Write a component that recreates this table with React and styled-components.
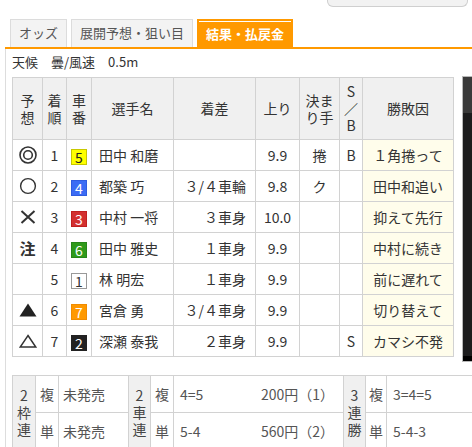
import React from 'react';
import styled, { createGlobalStyle } from 'styled-components';

const GlobalStyle = createGlobalStyle`
  html, body { margin: 0; padding: 0; background: #fff; overflow: hidden; }
  body { font-family: "Noto Sans CJK JP", "Noto Sans", sans-serif; color: #333; }
`;

const Page = styled.div`
  width: 472px;
  height: 447px;
  overflow: hidden;
`;

const TopBar = styled.div`
  display: flex;
  justify-content: flex-end;
  padding-right: 4px;
  height: 19px;
`;

const TopBox = styled.div`
  box-sizing: border-box;
  width: 141px;
  height: 7px;
  background: #f2f2f2;
  border: 1px solid #cfcfcf;
  border-top: none;
  border-radius: 0 0 6px 6px;
`;

const TabBar = styled.div`
  display: flex;
  gap: 4px;
  margin-left: 5px;
  padding-left: 5px;
  border-bottom: 2px solid #ff9900;
  width: 600px;
`;

const Tab = styled.div`
  box-sizing: border-box;
  height: 28px;
  padding: 0 ${p => p.$pad}px;
  font-size: 13px;
  line-height: ${p => (p.$active ? 25 : 26)}px;
  white-space: nowrap;
  border: ${p => (p.$active ? '2px solid #ff9900' : '1px solid #dcdcdc')};
  border-bottom: none;
  background: ${p => (p.$active ? '#ff9900' : '#f3f3f3')};
  color: ${p => (p.$active ? '#fff' : '#555')};
  font-weight: ${p => (p.$active ? 'bold' : 'normal')};
  box-shadow: ${p => (p.$active ? 'inset 0 1px 0 #fff' : 'none')};
`;

const Content = styled.div`
  margin-left: 5px;
  border-left: 1px solid #dddddd;
  padding: 4px 0 20px 6px;
  width: 600px;
`;

const Weather = styled.div`
  font-size: 13px;
  line-height: 18px;
  color: #333;
`;

const ResultRow = styled.div`
  display: flex;
  align-items: flex-start;
  gap: 8px;
  margin-top: 6px;
`;

const Table = styled.table`
  border-collapse: collapse;
  table-layout: fixed;
  width: ${p => p.$w}px;
  font-size: 14px;
  flex-shrink: 0;
`;

const Th = styled.th`
  height: 62px;
  box-sizing: border-box;
  background: #f0f0f0;
  border: 1px solid #d2d2d2;
  font-weight: normal;
  color: #333;
  padding: 0;
  line-height: 17px;
  text-align: center;
  vertical-align: middle;
`;

const Td = styled.td`
  height: 31px;
  box-sizing: border-box;
  border: 1px solid #d2d2d2;
  padding: 0 ${p => p.$pad || 0}px;
  text-align: ${p => p.$align || 'center'};
  vertical-align: middle;
  white-space: nowrap;
  line-height: 18px;
  background: ${p => p.$bg || '#fff'};
  color: #333;
`;

const MarkSvg = styled.svg`
  display: block;
  margin: 0 auto;
`;

const CarNo = styled.span`
  display: inline-block;
  box-sizing: border-box;
  width: 16px;
  height: 16px;
  line-height: 14px;
  font-size: 14px;
  text-align: center;
  vertical-align: middle;
  background: ${p => p.$bg};
  color: ${p => p.$fg};
  border: 1px solid ${p => p.$bd};
`;

const ChuMark = styled.span`
  font-size: 16px;
  font-weight: bold;
  color: #333;
`;

const SidePanel = styled.div`
  box-sizing: border-box;
  width: 40px;
  height: 286px;
  margin-top: -1px;
  margin-bottom: -10px;
  border: 1px solid #b8b8b8;
  background: linear-gradient(#3a3a3a 0 36px, #1c1c1d 36px 279px, #000 279px);
  flex-shrink: 0;
`;

const Payout = styled.table`
  border-collapse: collapse;
  table-layout: fixed;
  width: 494px;
  margin-top: 18px;
  font-size: 14px;
  color: #555;
`;

const Label = styled.td`
  background: #f0f0f0;
  border: 1px solid #d2d2d2;
  padding: 0;
  text-align: center;
  vertical-align: middle;
  line-height: 17px;
  color: #444;
`;

const Kind = styled.td`
  height: 37px;
  box-sizing: border-box;
  border: 1px solid #d2d2d2;
  padding: 0;
  line-height: 18px;
  text-align: center;
  vertical-align: middle;
  color: #555;
`;

const Val = styled.td`
  height: 37px;
  box-sizing: border-box;
  border: 1px solid #d2d2d2;
  padding: 0 ${p => p.$pr || 0}px 0 ${p => p.$pl}px;
  line-height: 18px;
  vertical-align: middle;
  white-space: nowrap;
  color: #555;
`;

const ValInner = styled.div`
  display: flex;
  justify-content: space-between;
`;

const CAR_COLORS = {
  1: ['#fff', '#333', '#999'],
  2: ['#222', '#fff', '#222'],
  3: ['#d33030', '#fff', '#c02020'],
  4: ['#3b6cf5', '#fff', '#2f5ce0'],
  5: ['#ffff00', '#222', '#c8c800'],
  6: ['#2f9a1a', '#fff', '#28861a'],
  7: ['#ff9900', '#fff', '#f08c00'],
};

function Mark({ type }) {
  const c = '#333';
  switch (type) {
    case 'double':
      return (
        <MarkSvg width="18" height="18" viewBox="0 0 18 18" aria-label="◎">
          <circle cx="9" cy="9" r="8" fill="none" stroke={c} strokeWidth="1.6" />
          <circle cx="9" cy="9" r="4.3" fill="none" stroke={c} strokeWidth="1.6" />
        </MarkSvg>
      );
    case 'circle':
      return (
        <MarkSvg width="18" height="18" viewBox="0 0 18 18" aria-label="○">
          <circle cx="9" cy="9" r="7.4" fill="none" stroke={c} strokeWidth="1.4" />
        </MarkSvg>
      );
    case 'cross':
      return (
        <MarkSvg width="16" height="14" viewBox="0 0 16 14" aria-label="×">
          <path d="M1.5 1 L14.5 13 M14.5 1 L1.5 13" stroke={c} strokeWidth="2" fill="none" />
        </MarkSvg>
      );
    case 'chu':
      return <ChuMark>注</ChuMark>;
    case 'tri':
      return (
        <MarkSvg width="18" height="14" viewBox="0 0 18 14" aria-label="▲">
          <path d="M9 0.5 L17.5 13.5 L0.5 13.5 Z" fill="#222" />
        </MarkSvg>
      );
    case 'otri':
      return (
        <MarkSvg width="18" height="14" viewBox="0 0 18 14" aria-label="△">
          <path d="M9 1.5 L16.8 13 L1.2 13 Z" fill="none" stroke={c} strokeWidth="1.5" strokeLinejoin="miter" />
        </MarkSvg>
      );
    default:
      return null;
  }
}

const rows = [
  { mark: 'double', pos: 1, car: 5, name: '田中 和磨', diff: '', time: '9.9', kim: '捲', sb: 'B', reason: '１角捲って' },
  { mark: 'circle', pos: 2, car: 4, name: '都築 巧', diff: '３/４車輪', time: '9.8', kim: 'ク', sb: '', reason: '田中和追い' },
  { mark: 'cross', pos: 3, car: 3, name: '中村 一将', diff: '３車身', time: '10.0', kim: '', sb: '', reason: '抑えて先行' },
  { mark: 'chu', pos: 4, car: 6, name: '田中 雅史', diff: '１車身', time: '9.9', kim: '', sb: '', reason: '中村に続き' },
  { mark: '', pos: 5, car: 1, name: '林 明宏', diff: '１車身', time: '9.9', kim: '', sb: '', reason: '前に遅れて' },
  { mark: 'tri', pos: 6, car: 7, name: '宮倉 勇', diff: '３/４車身', time: '9.9', kim: '', sb: '', reason: '切り替えて' },
  { mark: 'otri', pos: 7, car: 2, name: '深瀬 泰我', diff: '２車身', time: '9.9', kim: '', sb: 'S', reason: 'カマシ不発' },
];

const COLS = [30, 24, 25, 82, 82, 44, 40, 23, 91];
const PCOLS = [23, 23, 70, 22, 23, 170, 22, 21, 120];

export default function App() {
  return (
    <Page>
      <GlobalStyle />
      <TopBar>
        <TopBox />
      </TopBar>
      <TabBar>
        <Tab $pad={8}>オッズ</Tab>
        <Tab $pad={8}>展開予想・狙い目</Tab>
        <Tab $pad={7} $active>結果・払戻金</Tab>
      </TabBar>
      <Content>
        <Weather>天候　曇/風速　0.5m</Weather>
        <ResultRow>
          <Table $w={442}>
            <colgroup>
              {COLS.map((w, i) => <col key={i} style={{ width: w }} />)}
            </colgroup>
            <thead>
              <tr>
                <Th>予<br />想</Th>
                <Th>着<br />順</Th>
                <Th>車<br />番</Th>
                <Th>選手名</Th>
                <Th>着差</Th>
                <Th>上り</Th>
                <Th>決ま<br />り手</Th>
                <Th>S<br />／<br />B</Th>
                <Th>勝敗因</Th>
              </tr>
            </thead>
            <tbody>
              {rows.map(r => {
                const [bg, fg, bd] = CAR_COLORS[r.car];
                return (
                  <tr key={r.pos}>
                    <Td><Mark type={r.mark} /></Td>
                    <Td>{r.pos}</Td>
                    <Td><CarNo $bg={bg} $fg={fg} $bd={bd}>{r.car}</CarNo></Td>
                    <Td $align="left" $pad={7}>{r.name}</Td>
                    <Td $align="right" $pad={9}>{r.diff}</Td>
                    <Td>{r.time}</Td>
                    <Td>{r.kim}</Td>
                    <Td>{r.sb}</Td>
                    <Td $bg="#fffdeb">{r.reason}</Td>
                  </tr>
                );
              })}
            </tbody>
          </Table>
          <SidePanel />
        </ResultRow>
        <Payout>
          <colgroup>
            {PCOLS.map((w, i) => <col key={i} style={{ width: w }} />)}
          </colgroup>
          <tbody>
            <tr>
              <Label rowSpan={2}>2<br />枠<br />連</Label>
              <Kind>複</Kind>
              <Val $pl={4}>未発売</Val>
              <Label rowSpan={2}>2<br />車<br />連</Label>
              <Kind>複</Kind>
              <Val $pl={6} $pr={9}><ValInner><span>4=5</span><span>200円（1）</span></ValInner></Val>
              <Label rowSpan={2}>3<br />連<br />勝</Label>
              <Kind>複</Kind>
              <Val $pl={6}>3=4=5</Val>
            </tr>
            <tr>
              <Kind>単</Kind>
              <Val $pl={4}>未発売</Val>
              <Kind>単</Kind>
              <Val $pl={6} $pr={9}><ValInner><span>5-4</span><span>560円（2）</span></ValInner></Val>
              <Kind>単</Kind>
              <Val $pl={6}>5-4-3</Val>
            </tr>
          </tbody>
        </Payout>
      </Content>
    </Page>
  );
}
